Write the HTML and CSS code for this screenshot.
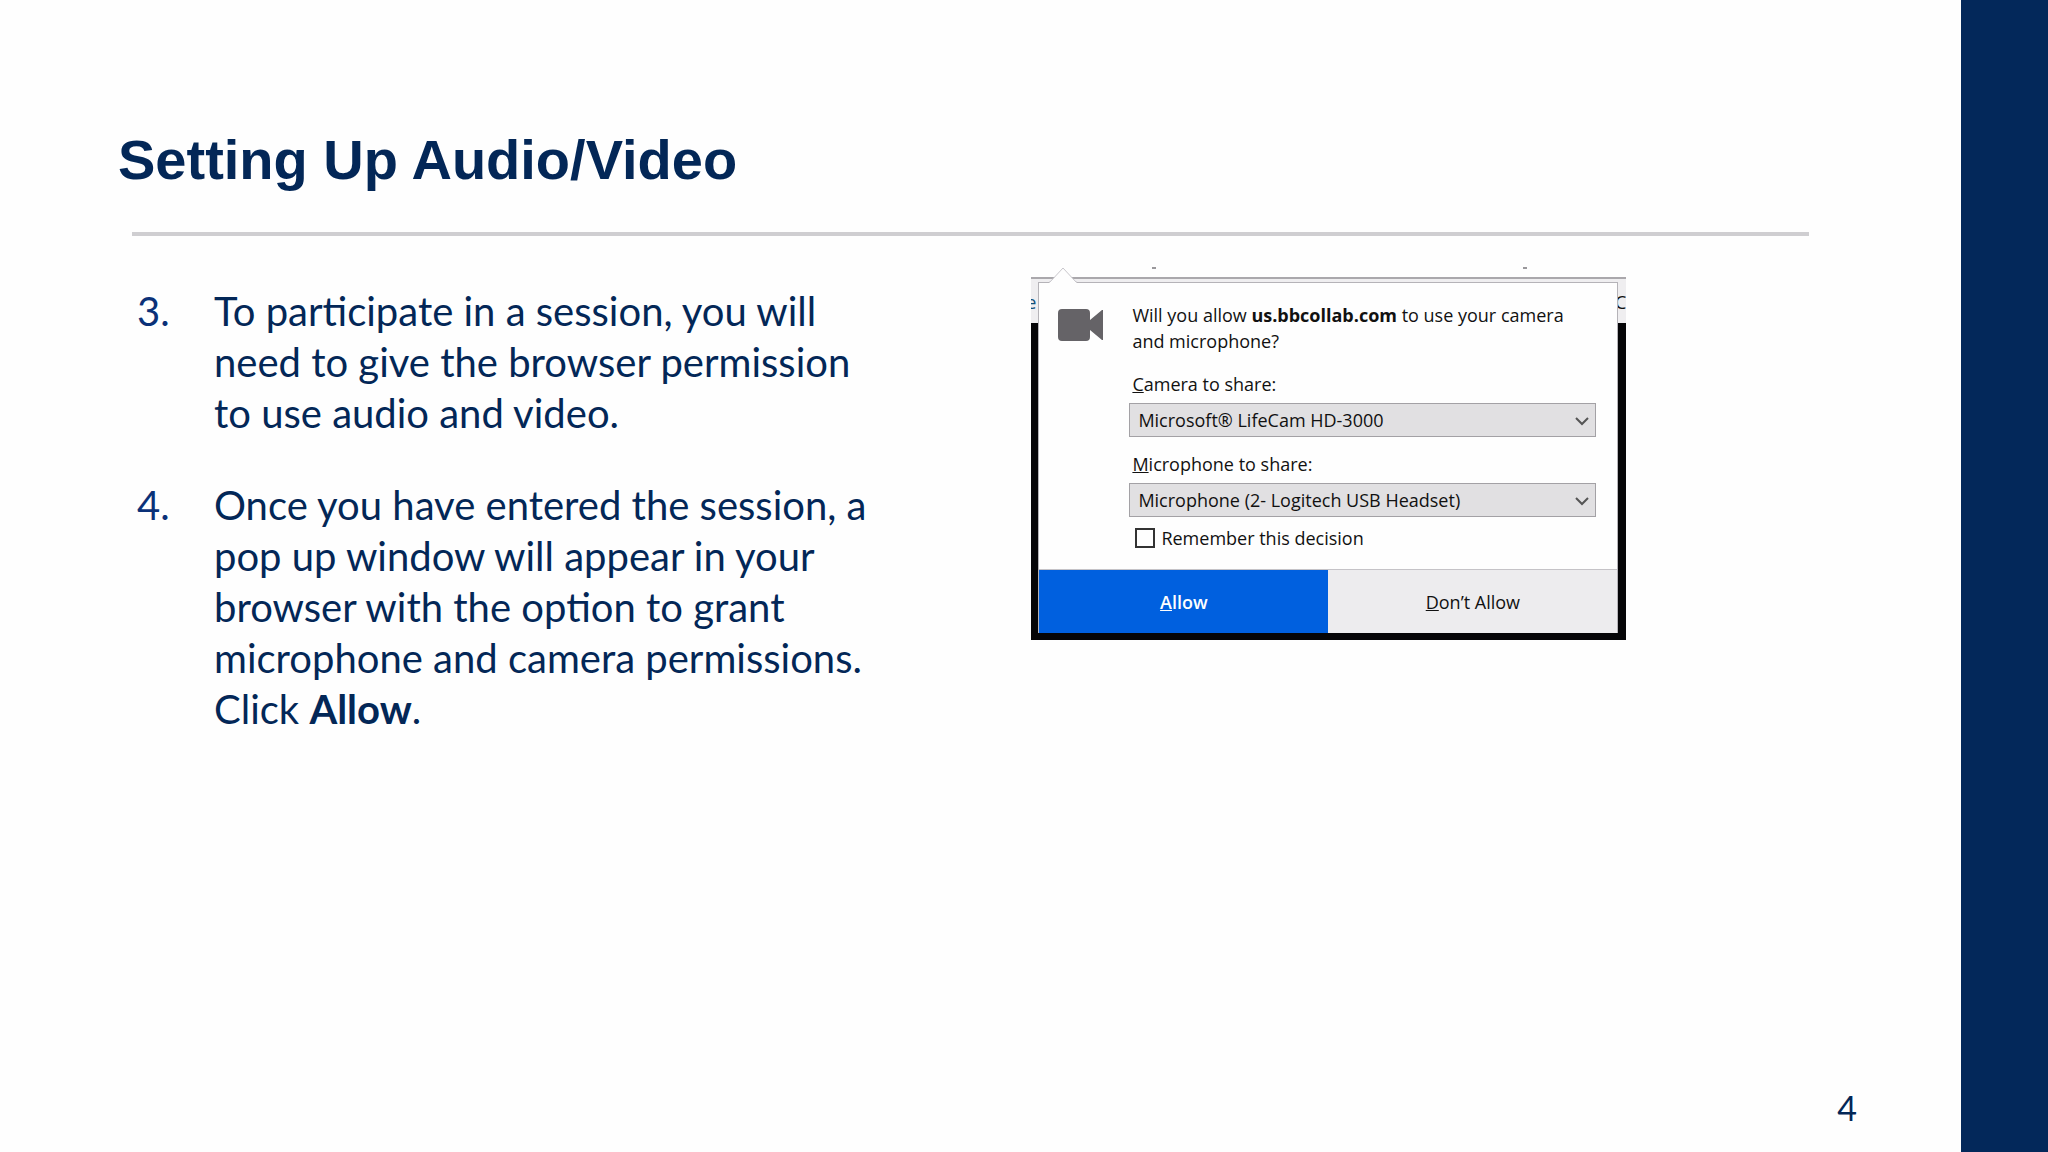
FILE: index.html
```
<!DOCTYPE html>
<html lang="en">

<head>
    <meta charset="UTF-8">
    <meta name="viewport" content="width=device-width, initial-scale=1.0">
    <title>Setting Up Audio/Video</title>
    <link rel="stylesheet" href="styles.css">
</head>

<body>
    <main class="slide">
        <h1>Setting Up Audio/Video</h1>

        <div class="content">
            <!-- Steps -->
            <ol class="steps" start="3">
                <li><span class="num">3.</span>
                    <p>To participate in a session, you will need to give the browser permission to use audio and video.</p>
                </li>
                <li><span class="num">4.</span>
                    <p>Once you have entered the session, a pop up window will appear in your browser with the option to grant microphone and camera permissions. Click <strong>Allow</strong>.</p>
                </li>
            </ol>

            <!-- Browser permission popup -->
            <div class="capture">
                <div class="specks"><i></i><i></i></div>
                <div class="window">
                    <span class="edge edge-left">e</span>
                    <form class="popup">
                        <svg class="arrow" viewBox="0 0 28 16" width="28" height="16">
                            <path d="M0 16L1 15L14 1L27 15L28 16Z" fill="#fefefe" />
                            <path d="M0 15L1 15L14 1L27 15L28 15" fill="none" stroke="#c9c7cc" />
                        </svg>
                        <div class="prompt">
                            <svg class="camera" viewBox="0 0 45 32" width="45" height="32">
                                <path d="M4 0H28Q32 0 32 4V11L44 1H45V31H44L32 21V28Q32 32 28 32H4Q0 32 0 28V4Q0 0 4 0Z" fill="#656367" />
                            </svg>
                            <div class="fields">
                                <p class="question">Will you allow <b>us.bbcollab.com</b> to use your camera and microphone?</p>
                                <label for="camera"><u>C</u>amera to share:</label>
                                <div class="select">
                                    <select id="camera">
                                        <option>Microsoft® LifeCam HD-3000</option>
                                    </select>
                                    <svg viewBox="0 0 14 9" width="14" height="9">
                                        <path d="M1 1L7 7L13 1" fill="none" stroke="#555" stroke-width="2" />
                                    </svg>
                                </div>
                                <label for="microphone"><u>M</u>icrophone to share:</label>
                                <div class="select">
                                    <select id="microphone">
                                        <option>Microphone (2- Logitech USB Headset)</option>
                                    </select>
                                    <svg viewBox="0 0 14 9" width="14" height="9">
                                        <path d="M1 1L7 7L13 1" fill="none" stroke="#555" stroke-width="2" />
                                    </svg>
                                </div>
                                <div class="remember">
                                    <input type="checkbox" id="remember">
                                    <label for="remember">Remember this decision</label>
                                </div>
                            </div>
                        </div>
                        <div class="buttons">
                            <button type="button" class="allow"><u>A</u>llow</button>
                            <button type="button" class="deny"><u>D</u>on’t Allow</button>
                        </div>
                    </form>
                    <span class="edge edge-right">C</span>
                </div>
            </div>
        </div>

        <footer>4</footer>
    </main>
    <aside class="band"></aside>
</body>

</html>
```
FILE: styles.css
```
* {
    box-sizing: border-box;
}

body {
    display: flex;
    min-height: 100vh;
    margin: 0;
    background: #fefefe;
    color: #032757;
    font-family: Lato, sans-serif;
}

h1,
p,
ol {
    margin: 0;
    padding: 0;
}

.slide {
    display: flex;
    flex: 1;
    flex-direction: column;
    padding: 128px 104px 20px 118px;
}

.band {
    width: 87px;
    background: #03285a;
}

h1 {
    font-family: "Liberation Sans", Arial, sans-serif;
    font-size: 56px;
    line-height: 64px;
}

/* Rule under the title */
h1::after {
    content: "";
    display: block;
    height: 4px;
    margin: 40px 48px 0 14px;
    background: #cfced1;
}

.content {
    display: grid;
    grid-template-columns: 52% auto;
    align-items: start;
    padding-left: 19px;
}

.steps {
    padding-top: 50px;
    list-style: none;
    font-size: 40px;
    line-height: 51px;
}

.steps li {
    display: flex;
    margin-bottom: 41px;
}

.num {
    flex: none;
    width: 77px;
    color: #0b3178;
}

.steps p {
    max-width: 666px;
}

.capture {
    width: 595px;
    padding-top: 31px;
    color: #111;
    font-family: "Open Sans", "Noto Sans", sans-serif;
    font-size: 18px;
}

/* Bottoms of the letters cut off above the toolbar */
.specks {
    display: flex;
    justify-content: space-between;
    height: 10px;
    padding: 0 99px 0 121px;
}

.specks i {
    width: 4px;
    height: 2px;
    background: #9a989c;
}

.window {
    display: flex;
    padding-bottom: 7px;
    border-top: 2px solid #aaa8ac;
    background: linear-gradient(#efeef0 44px, #050507 44px);
}

.edge {
    display: flex;
    flex: none;
    justify-content: flex-end;
    width: 8px;
    height: 44px;
    padding-top: 9px;
    overflow: hidden;
    line-height: 28px;
}

.edge-left {
    width: 7px;
    padding-right: 2px;
    color: #12507c;
}

.popup {
    position: relative;
    flex: 1;
    margin-top: 3px;
    border: 1px solid #b5b3b8;
    border-bottom: 0;
    background: #fefefe;
}

.arrow {
    position: absolute;
    top: -16px;
    left: 10px;
}

.prompt {
    display: flex;
    gap: 26px;
    padding: 19px 21px 20px 19px;
}

.camera {
    flex: none;
    margin-top: 7px;
}

.fields {
    flex: 1;
}

.question {
    margin: 0 0 17px 3px;
    line-height: 26px;
}

.question b {
    font-weight: 700;
}

.fields > label {
    display: block;
    margin-left: 3px;
    line-height: 26px;
}

.select {
    position: relative;
    margin: 6px 0 14px;
}

select {
    display: block;
    width: 100%;
    height: 34px;
    padding: 0 8px;
    border: 1px solid #a3a1a5;
    border-radius: 0;
    background: #e1e0e2;
    color: inherit;
    font: inherit;
    appearance: none;
}

.select svg {
    position: absolute;
    top: 14px;
    right: 7px;
}

.remember {
    display: flex;
    align-items: center;
    gap: 6px;
    margin: -4px 0 0 6px;
    line-height: 22px;
}

.remember input {
    width: 20px;
    height: 20px;
    margin: 0;
    border: 2px solid #333;
    background: #fefefe;
    appearance: none;
}

.remember input:checked {
    background: #0060df;
}

.buttons {
    display: grid;
    grid-template-columns: 1fr 1fr;
    border-top: 1px solid #c5c3c7;
}

button {
    height: 63px;
    border: 0;
    background: #edecee;
    color: inherit;
    font: inherit;
    cursor: pointer;
}

.allow {
    background: #0060df;
    color: #fefefe;
    font-weight: 600;
}

footer {
    margin-top: auto;
    font-size: 34px;
    line-height: 48px;
    text-align: right;
}
```
